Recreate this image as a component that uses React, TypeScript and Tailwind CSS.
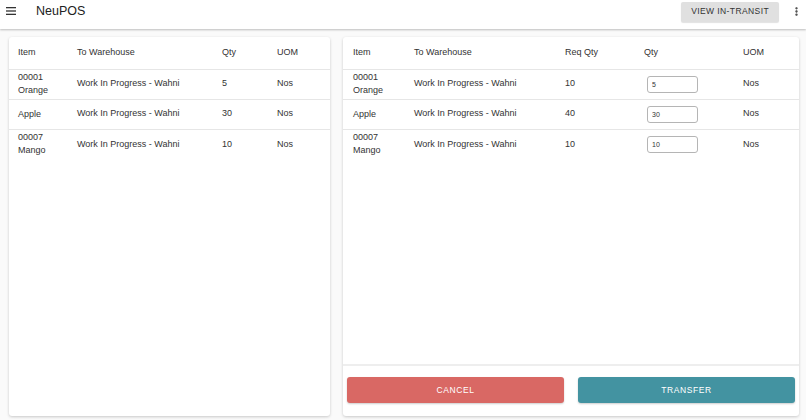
import { MoreVertical } from 'lucide-react';

type Row = { code?: string; name: string; warehouse: string; reqQty?: number; qty: number; uom: string };

const sentRows: Row[] = [
    { code: '00001', name: 'Orange', warehouse: 'Work In Progress - Wahni', qty: 5, uom: 'Nos' },
    { name: 'Apple', warehouse: 'Work In Progress - Wahni', qty: 30, uom: 'Nos' },
    { code: '00007', name: 'Mango', warehouse: 'Work In Progress - Wahni', qty: 10, uom: 'Nos' },
];

const requestRows: Row[] = [
    { code: '00001', name: 'Orange', warehouse: 'Work In Progress - Wahni', reqQty: 10, qty: 5, uom: 'Nos' },
    { name: 'Apple', warehouse: 'Work In Progress - Wahni', reqQty: 40, qty: 30, uom: 'Nos' },
    { code: '00007', name: 'Mango', warehouse: 'Work In Progress - Wahni', reqQty: 10, qty: 10, uom: 'Nos' },
];

function ItemCell({ row }: { row: Row }) {
    return (
        <div className="leading-[13px]">
            {row.code && <div>{row.code}</div>}
            <div>{row.name}</div>
        </div>
    );
}

function Hamburger() {
    return (
        <svg width="10" height="8" viewBox="0 0 10 8" className="text-[#333]">
            <rect x="0" y="0" width="10" height="1.3" fill="currentColor" />
            <rect x="0" y="3.35" width="10" height="1.3" fill="currentColor" />
            <rect x="0" y="6.7" width="10" height="1.3" fill="currentColor" />
        </svg>
    );
}

export default function App() {
    return (
        <div className="h-[420px] w-[806px] flex flex-col bg-[#fafafa] text-[#333] font-['Liberation_Sans',Arial,sans-serif] text-[9px] overflow-hidden">
            {/* App bar */}
            <header className="h-[29px] shrink-0 bg-white pl-[6px] pr-[4px] shadow-[0_1px_2px_rgba(0,0,0,0.25)] relative z-10">
                <div className="h-[22px] flex items-center">
                    <Hamburger />
                    <span className="ml-[20px] text-[12.5px] text-[#222]">NeuPOS</span>
                    <div className="flex-1" />
                    <button className="h-[20px] mt-[1px] px-[10px] bg-[#e0e0e0] rounded-[2px] text-[8.5px] tracking-[0.4px] text-[#333] shadow-[0_1px_1px_rgba(0,0,0,0.12)]">
                        VIEW IN-TRANSIT
                    </button>
                    <MoreVertical className="ml-[12px] w-[11px] h-[11px] text-[#333]" strokeWidth={3} />
                </div>
            </header>

            <main className="flex-1 flex gap-[13px] pt-[8px] pb-[4px] pl-[9px] pr-[7px] min-h-0">
                {/* Left card */}
                <section className="w-[321px] bg-white rounded-[3px] shadow-[0_1px_3px_rgba(0,0,0,0.2)]">
                    <table className="w-full table-fixed border-collapse">
                        <colgroup>
                            <col className="w-[68px]" />
                            <col className="w-[145px]" />
                            <col className="w-[55px]" />
                            <col />
                        </colgroup>
                        <thead>
                            <tr className="h-[32px] border-b border-[#e6e6e6] text-left">
                                <th className="pl-[9px] font-normal">Item</th>
                                <th className="font-normal">To Warehouse</th>
                                <th className="font-normal">Qty</th>
                                <th className="font-normal">UOM</th>
                            </tr>
                        </thead>
                        <tbody>
                            {sentRows.map((r, i) => (
                                <tr key={i} className={`h-[30px] ${i < sentRows.length - 1 ? 'border-b border-[#e6e6e6]' : ''}`}>
                                    <td className="pl-[9px]"><ItemCell row={r} /></td>
                                    <td>{r.warehouse}</td>
                                    <td>{r.qty}</td>
                                    <td>{r.uom}</td>
                                </tr>
                            ))}
                        </tbody>
                    </table>
                </section>

                {/* Right card */}
                <section className="flex-1 flex flex-col bg-white rounded-[3px] shadow-[0_1px_3px_rgba(0,0,0,0.2)]">
                    <table className="w-full table-fixed border-collapse">
                        <colgroup>
                            <col className="w-[71px]" />
                            <col className="w-[151px]" />
                            <col className="w-[79px]" />
                            <col className="w-[99px]" />
                            <col />
                        </colgroup>
                        <thead>
                            <tr className="h-[32px] border-b border-[#e6e6e6] text-left">
                                <th className="pl-[10px] font-normal">Item</th>
                                <th className="font-normal">To Warehouse</th>
                                <th className="font-normal">Req Qty</th>
                                <th className="font-normal">Qty</th>
                                <th className="font-normal">UOM</th>
                            </tr>
                        </thead>
                        <tbody>
                            {requestRows.map((r, i) => (
                                <tr key={i} className={`h-[30px] ${i < requestRows.length - 1 ? 'border-b border-[#e6e6e6]' : ''}`}>
                                    <td className="pl-[10px]"><ItemCell row={r} /></td>
                                    <td>{r.warehouse}</td>
                                    <td>{r.reqQty}</td>
                                    <td>
                                        <input
                                            defaultValue={r.qty}
                                            className="ml-[3px] w-[51px] h-[17px] px-[4px] border border-[#b5b5b5] rounded-[3px] text-[7px] text-[#333] outline-none font-['Liberation_Sans',Arial,sans-serif]"
                                        />
                                    </td>
                                    <td>{r.uom}</td>
                                </tr>
                            ))}
                        </tbody>
                    </table>
                    <div className="flex-1" />
                    <div className="border-t-2 border-[#eeeeee] flex gap-[14px] px-[4px] pt-[11px] pb-[13px]">
                        <button className="flex-1 h-[26px] rounded-[3px] bg-[#d96864] text-white text-[8.5px] tracking-[0.6px] shadow-[0_1px_2px_rgba(0,0,0,0.2)]">
                            CANCEL
                        </button>
                        <button className="flex-1 h-[26px] rounded-[3px] bg-[#4393a1] text-white text-[8.5px] tracking-[0.6px] shadow-[0_1px_2px_rgba(0,0,0,0.2)]">
                            TRANSFER
                        </button>
                    </div>
                </section>
            </main>
        </div>
    );
}
